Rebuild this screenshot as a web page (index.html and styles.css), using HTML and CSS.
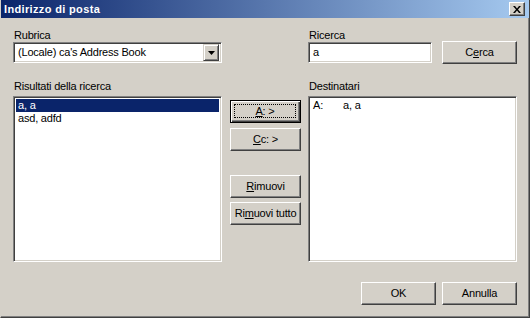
FILE: index.html
```html
<!DOCTYPE html>
<html>
<head>
<meta charset="utf-8">
<link rel="stylesheet" href="styles.css">
</head>
<body>
<div class="window">
  <div class="titlebar">
    <span class="title">Indirizzo di posta</span>
    <span class="close"><svg width="8" height="7" viewBox="0 0 8 7"><path d="M0 0h2l2 2.5L6 0h2L5 3.5 8 7H6L4 4.5 2 7H0l3-3.5z" fill="#000"/></svg></span>
  </div>
  <div class="content">
    <div class="grid">
      <div class="field">
        <div class="label">Rubrica</div>
        <div class="combo sunken">
          <span class="combo-text">(Locale) ca's Address Book</span>
          <span class="combo-btn"><svg width="7" height="4" viewBox="0 0 7 4"><path d="M0 0h7L3.5 4z" fill="#000"/></svg></span>
        </div>
      </div>
      <div></div>
      <div class="search-row">
        <div class="field">
          <div class="label">Ricerca</div>
          <div class="input sunken">a</div>
        </div>
        <div class="btn cerca">C<u>e</u>rca</div>
      </div>

      <div class="field">
        <div class="label label2">Risultati della ricerca</div>
        <div class="listbox sunken">
          <div class="row selected">a, a</div>
          <div class="row">asd, adfd</div>
        </div>
      </div>
      <div class="mid">
        <div class="btn default"><span class="focus"><u>A</u>: &gt;</span></div>
        <div class="btn gap-small"><u>C</u>c: &gt;</div>
        <div class="btn gap-large"><u>R</u>imuovi</div>
        <div class="btn gap-tiny">Ri<u>m</u>uovi tutto</div>
      </div>
      <div class="field">
        <div class="label label2">Destinatari</div>
        <div class="listbox sunken">
          <div class="row dest"><span class="col-a">A:</span><span>a, a</span></div>
        </div>
      </div>
    </div>
    <div class="footer">
      <div class="btn">OK</div>
      <div class="btn">Annulla</div>
    </div>
  </div>
</div>
</body>
</html>
```
FILE: styles.css
```css
* { box-sizing: border-box; }
body {
  margin: 0;
  font-family: "Liberation Sans", Arial, sans-serif;
  font-size: 11px;
  letter-spacing: -0.2px;
  color: #000;
}
.window {
  width: 530px;
  height: 318px;
  background: #d4d0c8;
  border-left: 1px solid #d4d0c8;
  border-right: 1px solid #404040;
  border-bottom: 1px solid #404040;
  box-shadow: inset -1px -1px #808080;
  display: flex;
  flex-direction: column;
}
.titlebar {
  height: 18px;
  flex: none;
  background: linear-gradient(to right, #0a246a, #a6caf0);
  display: flex;
  align-items: center;
  justify-content: space-between;
  padding: 0 4px 0 3px;
  color: #fff;
}
.title {
  font-weight: bold;
  font-size: 11px;
  letter-spacing: 0.35px;
}
.close {
  width: 16px;
  height: 14px;
  background: #d4d0c8;
  border: 1px solid;
  border-color: #fff #404040 #404040 #fff;
  box-shadow: inset -1px -1px #808080;
  display: flex;
  align-items: center;
  justify-content: center;
  padding-right: 1px;
}
.close svg { display: block; }
.content {
  flex: 1;
  padding: 11px 12px 0 12px;
  display: flex;
  flex-direction: column;
}
.grid {
  display: grid;
  grid-template-columns: 209px 86px 209px;
  grid-template-rows: auto auto;
  row-gap: 17px;
}
.field { display: flex; flex-direction: column; }
.label {
  height: 13px;
  line-height: 13px;
  padding-left: 1px;
}
.label2 {
  height: 16px;
}
.sunken {
  background: #fff;
  border: 1px solid;
  border-color: #808080 #fff #fff #808080;
  box-shadow: inset 1px 1px #404040, inset -1px -1px #d4d0c8;
}
.combo {
  height: 21px;
  display: flex;
  align-items: center;
  padding: 2px;
}
.combo-text {
  flex: 1;
  padding-left: 2px;
  line-height: 13px;
}
.combo-btn {
  width: 16px;
  height: 17px;
  background: #d4d0c8;
  border: 1px solid;
  border-color: #d4d0c8 #404040 #404040 #d4d0c8;
  box-shadow: inset 1px 1px #fff, inset -1px -1px #808080;
  display: flex;
  align-items: center;
  justify-content: center;
}
.combo-btn svg { display: block; }
.search-row {
  display: flex;
  align-items: flex-end;
  gap: 10px;
}
.input {
  width: 124px;
  height: 21px;
  padding: 3px 4px;
  line-height: 13px;
}
.btn {
  width: 75px;
  height: 23px;
  background: #d4d0c8;
  border: 1px solid;
  border-color: #fff #404040 #404040 #fff;
  box-shadow: inset -1px -1px #808080;
  display: flex;
  align-items: center;
  justify-content: center;
  line-height: 13px;
  padding-bottom: 1px;
}
.cerca { margin-bottom: -1px; }
.listbox {
  height: 166px;
  padding: 2px;
}
.row {
  height: 13px;
  line-height: 13px;
  padding-left: 2px;
}
.selected {
  background: #0a246a;
  color: #fff;
}
.dest { display: flex; padding-left: 2px; }
.col-a { width: 30px; }
.mid {
  display: flex;
  flex-direction: column;
  padding: 20px 0 0 8px;
}
.mid .btn { width: 71px; }
.default {
  border-color: #000;
  box-shadow: inset 1px 1px #fff, inset -1px -1px #404040, inset -2px -2px #808080;
  padding: 3px 4px 4px 3px;
}
.focus {
  flex: 1;
  align-self: stretch;
  border: 1px dotted #000;
  display: flex;
  align-items: center;
  justify-content: center;
}
.gap-small { margin-top: 5px; }
.gap-large { margin-top: 24px; }
.gap-tiny { margin-top: 4px; }
.footer {
  display: flex;
  justify-content: flex-end;
  gap: 6px;
  margin-top: 20px;
}
```
